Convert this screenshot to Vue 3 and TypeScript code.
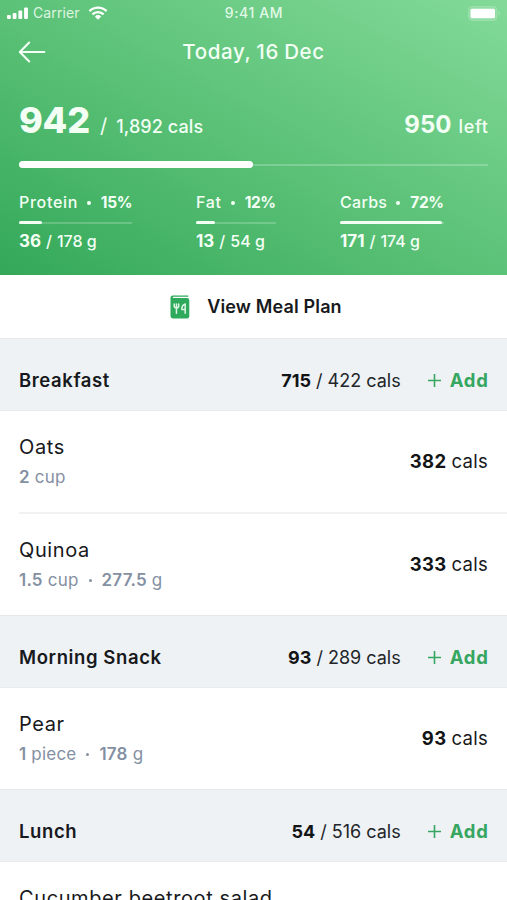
<script setup lang="ts">
interface Macro {
  key: string
  name: string
  percent: number
  eaten: number
  goal: number
  fill: number
}

interface Food {
  name: string
  serving: [string, string][]
  cals: number
  key: string
}

interface Meal {
  key: string
  name: string
  eaten: number
  goal: number
  foods: Food[]
}

const macros: Macro[] = [
  { key: 'protein', name: 'Protein', percent: 15, eaten: 36, goal: 178, fill: 20 },
  { key: 'fat', name: 'Fat', percent: 12, eaten: 13, goal: 54, fill: 24 },
  { key: 'carbs', name: 'Carbs', percent: 72, eaten: 171, goal: 174, fill: 98 },
]

const meals: Meal[] = [
  {
    key: 'breakfast',
    name: 'Breakfast',
    eaten: 715,
    goal: 422,
    foods: [
      { key: 'oats', name: 'Oats', serving: [['2', 'cup']], cals: 382 },
      { key: 'quinoa', name: 'Quinoa', serving: [['1.5', 'cup'], ['277.5', 'g']], cals: 333 },
    ],
  },
  {
    key: 'snack',
    name: 'Morning Snack',
    eaten: 93,
    goal: 289,
    foods: [{ key: 'pear', name: 'Pear', serving: [['1', 'piece'], ['178', 'g']], cals: 93 }],
  },
  {
    key: 'lunch',
    name: 'Lunch',
    eaten: 54,
    goal: 516,
    foods: [{ key: 'salad', name: 'Cucumber beetroot salad', serving: [], cals: 0 }],
  },
]
</script>

<template>
  <main class="screen">
    <header class="hero">
      <div class="status">
        <div class="status-left">
          <svg class="signal" width="22" height="12" viewBox="0 0 22 12">
            <rect x="0" y="8" width="3.8" height="4" rx="1" />
            <rect x="5.7" y="6" width="3.8" height="6" rx="1" />
            <rect x="11.4" y="3.4" width="3.8" height="8.6" rx="1" />
            <rect x="17.1" y="0.5" width="3.8" height="11.5" rx="1" />
          </svg>
          <span class="carrier">Carrier</span>
          <svg class="wifi" width="20" height="14" viewBox="0 0 20 14">
            <path d="M1.4 5.1a12.4 12.4 0 0 1 17.2 0" />
            <path d="M4.4 8.4a8.1 8.1 0 0 1 11.2 0" />
            <path class="wifi-dot" d="M6.8 10.6a4.7 4.7 0 0 1 6.4 0L10 13.8z" />
          </svg>
        </div>
        <span class="clock">9:41 AM</span>
        <svg class="battery" width="33" height="15" viewBox="0 0 33 15">
          <rect class="battery-shell" x="0.5" y="0.5" width="28.5" height="14" rx="3.5" />
          <rect class="battery-level" x="2.5" y="2.8" width="24.5" height="9.4" rx="1.5" />
          <path class="battery-tip" d="M30.5 5c1.7.8 1.7 4.2 0 5z" />
        </svg>
      </div>

      <div class="navbar">
        <svg class="back" width="28" height="22" viewBox="0 0 28 22">
          <path d="M26.300 11H2M11.200 1.600 1.800 11l9.400 9.400" />
        </svg>
        <h1>Today, 16 Dec</h1>
      </div>

      <div class="totals">
        <div class="consumed">
          <strong>942</strong><span class="slash">/</span><span class="goal">1,892 cals</span>
        </div>
        <div class="remaining"><strong>950</strong><span>left</span></div>
      </div>

      <div class="total-bar"><div class="total-fill"></div></div>

      <div class="macros">
        <section v-for="m in macros" :key="m.key" class="macro" :class="m.key">
          <div class="macro-head">
            <span class="macro-name">{{ m.name }}</span>
            <i class="dot"></i>
            <b>{{ m.percent }}%</b>
          </div>
          <div class="macro-bar"><div class="macro-fill" :style="{ width: m.fill + '%' }"></div></div>
          <div class="macro-amount">
            <b>{{ m.eaten }}</b><span>/</span><span>{{ m.goal }} g</span>
          </div>
        </section>
      </div>
    </header>

    <div class="plan">
      <svg width="20" height="24" viewBox="0 0 20 24">
        <path class="book" d="M3.2.5h15.200v1.300H3.400c-1 0-1 1.200 0 1.200H17a2.300 2.300 0 0 1 2.300 2.300v15.900a2.300 2.300 0 0 1-2.300 2.300H3A2.400 2.400 0 0 1 .5 21.100V3.100A2.600 2.600 0 0 1 3.200.5z" />
        <path class="cutlery" d="M4.200 9v2.100c0 2.400 4.500 2.400 4.500 0V9M6.450 9v9.200M15.200 18.200V9c-2.200.8-3.500 3-3.400 5.500h3.400" />
      </svg>
      <span>View Meal Plan</span>
    </div>

    <section v-for="meal in meals" :key="meal.key" class="meal">
      <div class="meal-head">
        <h2>{{ meal.name }}</h2>
        <div class="meal-total">
          <b>{{ meal.eaten }}</b><span class="slash">/</span><span>{{ meal.goal }} cals</span>
        </div>
        <div class="add">
          <svg width="13" height="13" viewBox="0 0 13 13"><path d="M6.500 0v13M0 6.500h13" /></svg>
          <span>Add</span>
        </div>
      </div>
      <div v-for="food in meal.foods" :key="food.key" class="food">
        <div class="food-info">
          <h3>{{ food.name }}</h3>
          <p>
            <template v-for="(part, i) in food.serving" :key="i">
              <i v-if="i > 0" class="dot"></i>
              <span><b>{{ part[0] }}</b> {{ part[1] }}</span>
            </template>
          </p>
        </div>
        <div v-if="food.cals" class="food-cals"><b>{{ food.cals }}</b><span>cals</span></div>
      </div>
    </section>
  </main>
</template>

<style>
body {
  margin: 0;
  overflow: hidden;
}
</style>

<style scoped>
.screen {
  width: 507px;
  height: 900px;
  overflow: hidden;
  background: #fff;
  color: #17191c;
  font-family: Inter, 'Liberation Sans', sans-serif;
  font-size: 18px;
  line-height: 24px;
  white-space: nowrap;
}
h1, h2, h3, p { margin: 0; }
svg { display: block; flex: none; }
path { fill: none; }

.hero {
  box-sizing: border-box;
  height: 275px;
  background: linear-gradient(to top right, #34a858 0%, #5cc278 50%, #83da99 100%);
  color: #f3fff5;
}
.status {
  display: grid;
  grid-template-columns: 1fr auto 1fr;
  align-items: center;
  height: 26px;
  padding: 0 6px 0 7px;
}
.status-left { display: flex; align-items: center; }
.signal, .battery-level, .battery-tip { fill: #fff; }
.carrier { margin-left: 4px; font-size: 14px; letter-spacing: 0.1px; opacity: 0.85; }
.wifi { margin: -1px 0 0 8px; }
.wifi path { stroke: #fff; stroke-width: 2.3; }
.wifi .wifi-dot { fill: #fff; stroke: none; }
.clock { font-size: 14px; font-weight: 500; letter-spacing: 0.6px; opacity: 0.88; }
.battery { justify-self: end; }
.battery-shell { fill: rgba(255, 255, 255, 0.15); stroke: rgba(255, 255, 255, 0.16); }
.battery-tip { opacity: 0.3; }

.navbar {
  display: grid;
  grid-template-columns: 28px 1fr 28px;
  align-items: center;
  height: 52px;
  padding: 0 18px;
}
.back path { stroke: #f3fff5; stroke-width: 2.1; stroke-linecap: round; stroke-linejoin: round; }
h1 { text-align: center; font-size: 20.5px; font-weight: 500; letter-spacing: 0.65px; word-spacing: -1px; }

.totals {
  display: flex;
  justify-content: space-between;
  align-items: baseline;
  height: 83px;
  padding: 22px 19px 0;
  box-sizing: border-box;
}
.consumed, .remaining { display: flex; align-items: baseline; line-height: 40px; }
.consumed strong { font-size: 36px; font-weight: 800; letter-spacing: -0.2px; }
.consumed .slash { margin: 0 9px 0 10px; font-size: 20px; }
.goal { font-weight: 500; letter-spacing: 0.1px; }
.remaining strong { margin-right: 7px; font-size: 24px; font-weight: 700; }
.remaining span { font-weight: 500; letter-spacing: 0.7px; margin-right: -0.7px; }

.total-bar {
  display: flex;
  align-items: center;
  height: 7px;
  margin: 0 19px;
  background: linear-gradient(rgba(255, 255, 255, 0.22), rgba(255, 255, 255, 0.22)) center / 100% 2px no-repeat;
}
.total-fill { width: 234px; height: 7px; border-radius: 4px; background: #fff; }

.macros { display: flex; padding: 22px 19px 0; }
.macro { width: 113px; }
.macro.fat { width: 80px; margin-left: 64px; }
.macro.carbs { width: 104px; margin-left: 64px; }
.macro-head { display: flex; align-items: baseline; font-size: 16px; font-weight: 500; }
.macro-name { letter-spacing: 0.7px; }
.carbs .macro-name { letter-spacing: 0.3px; }
.macro-head b { font-size: 15.5px; font-weight: 700; letter-spacing: -0.4px; }
.dot { align-self: center; width: 4px; height: 4px; margin: 0 10px 0 9px; border-radius: 50%; background: currentColor; }
.macro-bar { height: 3px; margin: 6px 0 5px; background: linear-gradient(rgba(255, 255, 255, 0.2), rgba(255, 255, 255, 0.2)) center / 100% 2px no-repeat; }
.macro-fill { height: 3px; border-radius: 1.5px; background: #f3fff5; }
.macro-amount { display: flex; align-items: baseline; gap: 5px; font-size: 16px; font-weight: 500; }
.macro-amount b { font-size: 17px; font-weight: 700; }

.plan {
  display: flex;
  align-items: center;
  justify-content: center;
  gap: 17px;
  height: 63px;
  padding-left: 5px;
  font-weight: 600;
  letter-spacing: 0.15px;
}
.book { fill: #2fa95c; }
.cutlery { stroke: #dff6e6; stroke-width: 1.5; stroke-linecap: round; stroke-linejoin: round; }

.meal-head {
  box-sizing: border-box;
  display: flex;
  align-items: baseline;
  height: 73px;
  padding: 30px 19px 0;
  border-top: 1px solid #e5e8eb;
  border-bottom: 1px solid #e9ecef;
  background: #eef2f5;
}
h2 { flex: 1; font-size: 18.5px; font-weight: 600; line-height: 22px; letter-spacing: 0.6px; }
.meal-total { display: flex; line-height: 22px; color: #222529; }
.meal-total b { color: #121416; font-weight: 700; }
.meal-total .slash { margin: 0 5px; }
.add { display: flex; align-items: baseline; margin: 0 -0.8px 0 27px; color: #37a661; font-size: 18.5px; font-weight: 700; line-height: 22px; letter-spacing: 0.8px; }
.add svg { align-self: center; margin-right: 9px; }
.add path { stroke: currentColor; stroke-width: 1.6; }

.food {
  box-sizing: border-box;
  display: flex;
  justify-content: space-between;
  height: 101px;
  margin-left: 19px;
  padding: 24px 19px 0 0;
}
.food + .food { height: 103px; border-top: 2px solid #f0f1f3; }
h3 { font-size: 20px; font-weight: 400; line-height: 24px; letter-spacing: 0.6px; }
.food p { display: flex; align-items: center; margin-top: 6px; color: #8490a2; font-size: 17px; letter-spacing: 0.2px; }
.food p b { font-weight: 600; }
.food p .dot { width: 3px; height: 3px; margin: 0 10px; }
.food-cals { display: flex; gap: 5px; margin-top: 14px; font-size: 18.5px; letter-spacing: 0.3px; }
.food-cals b { color: #121416; font-weight: 700; }
</style>
